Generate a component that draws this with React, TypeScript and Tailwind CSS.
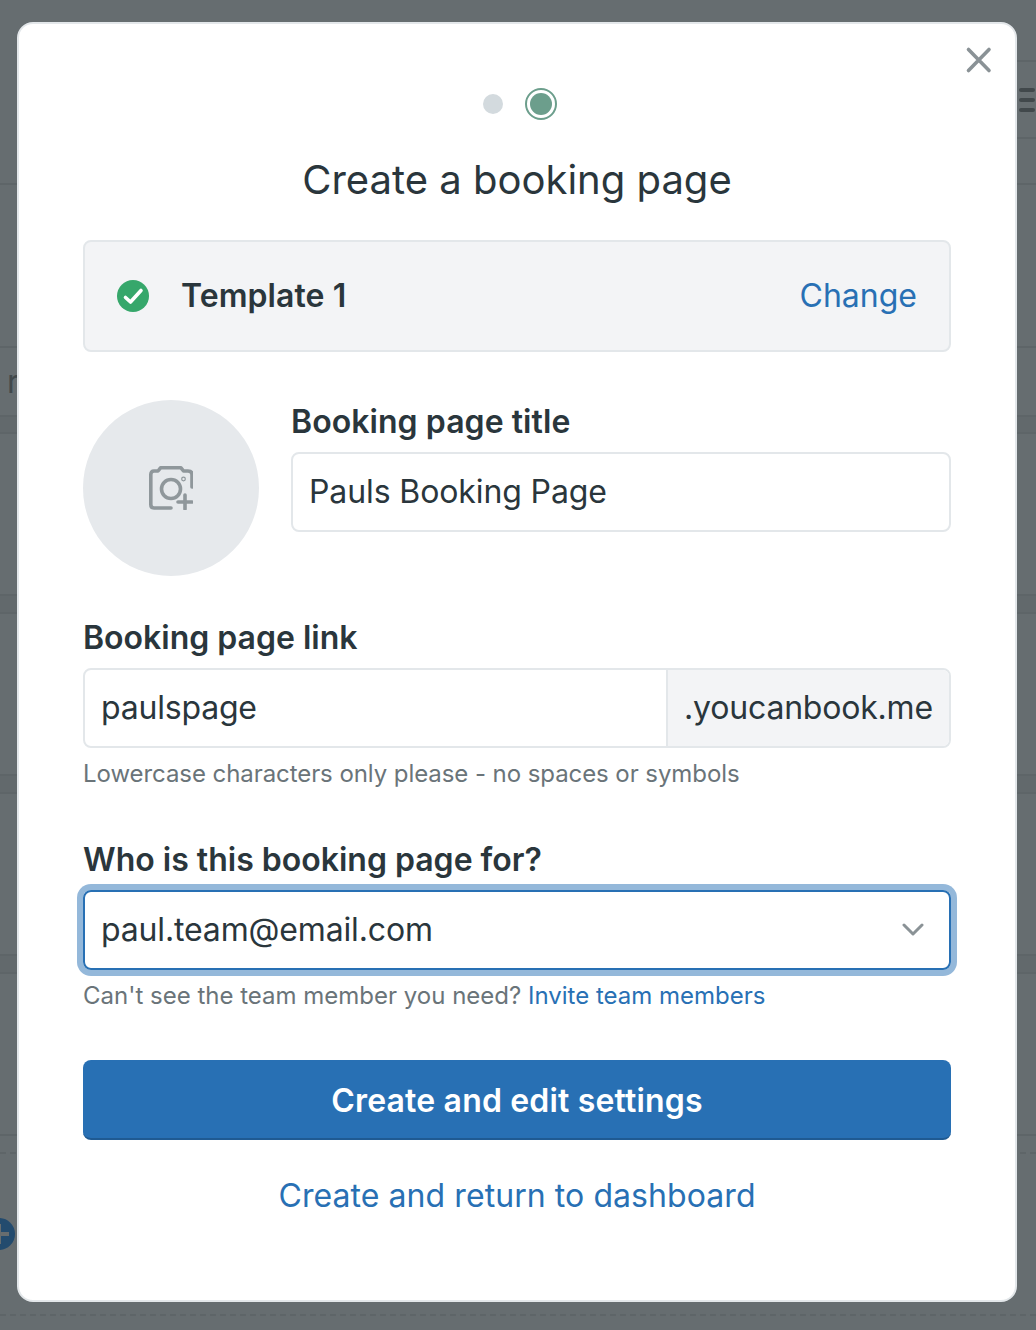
import React from "react";

const line = "shrink-0 border-b-2 border-[#5e6568]";

function PageBehind() {
  return (
    <div className="h-[1330px] bg-[#666d70] overflow-hidden flex flex-col font-['Inter',sans-serif]">
      <div className="h-[185px] shrink-0 border-b-2 border-[#5e6568] flex justify-end">
        <div className="w-[20px] flex flex-col">
          <div className="h-[62px] shrink-0 border-b-2 border-[#5e6568]" />
          <div className="h-[77px] shrink-0 border-b-2 border-[#5e6568] pt-[26px] pl-[3px] pr-[1px] flex flex-col gap-[6px]">
            <div className="h-[4px] rounded-full bg-[#41484b]" />
            <div className="h-[4px] rounded-full bg-[#41484b]" />
            <div className="h-[4px] rounded-full bg-[#41484b]" />
          </div>
        </div>
      </div>
      <div className={`h-[163px] ${line}`} />
      <div className={`h-[69px] ${line} pl-[7px] pt-[14px] text-[32px] leading-[40px] text-[#41484b]`}>r</div>
      <div className={`h-[17px] ${line} bg-[#62696c]`} />
      <div className={`h-[162px] ${line}`} />
      <div className={`h-[18px] ${line} bg-[#62696c]`} />
      <div className={`h-[162px] ${line}`} />
      <div className={`h-[18px] ${line} bg-[#62696c]`} />
      <div className={`h-[162px] ${line}`} />
      <div className={`h-[18px] ${line} bg-[#62696c]`} />
      <div className={`h-[162px] ${line}`} />
      <div className="h-[18px] shrink-0 border-b-2 border-dashed border-[#5e6568]" />
      <div className="h-[162px] shrink-0 border-b-2 border-dashed border-[#5e6568] pt-[64px]">
        <div className="w-[32px] h-[32px] -ml-[17px] rounded-full bg-[#234b6e] flex items-center justify-center">
          <div className="relative w-[20px] h-[20px]">
            <div className="absolute left-[8px] top-0 w-[4px] h-[20px] bg-[#666c6f]" />
            <div className="absolute left-0 top-[8px] w-[20px] h-[4px] bg-[#666c6f]" />
          </div>
        </div>
      </div>
    </div>
  );
}

function Label({ children, className = "" }: { children: React.ReactNode; className?: string }) {
  return <div className={`text-[32px] leading-[40px] font-semibold text-[#2a363c] ${className}`}>{children}</div>;
}

export default function App() {
  return (
    <div className="relative w-[1036px] h-[1330px] overflow-hidden font-['Inter',sans-serif]">
      <PageBehind />
      <div className="absolute left-[17px] top-[22px] w-[1000px] h-[1280px] bg-white border-2 border-[#e3e7ea] rounded-[16px] px-[64px]">
        <button className="absolute right-[23px] top-[22px] w-[28px] h-[28px] text-[#8a9296]">
          <svg viewBox="0 0 28 28" className="w-[28px] h-[28px]" fill="none" stroke="currentColor" strokeWidth="3.6" strokeLinecap="round">
            <path d="M4.5 3.5 L25 24.5 M25 3.5 L4.5 24.5" />
          </svg>
        </button>

        <div className="flex items-center justify-center h-[32px] mt-[64px] gap-[22px] pl-[6px]">
          <div className="w-[20px] h-[20px] rounded-full bg-[#d3dade]" />
          <div className="w-[32px] h-[32px] rounded-full border-2 border-[#6c9e8c] flex items-center justify-center">
            <div className="w-[22px] h-[22px] rounded-full bg-[#6c9e8c]" />
          </div>
        </div>

        <h1 className="mt-[36px] text-center text-[40px] leading-[48px] font-normal text-[#2a363c]">Create a booking page</h1>

        <div className="mt-[36px] h-[112px] rounded-[8px] border-2 border-[#e3e7ea] bg-[#f3f4f6] flex items-center px-[32px]">
          <svg viewBox="0 0 32 32" className="w-[32px] h-[32px] shrink-0">
            <circle cx="16" cy="16" r="16" fill="#36a76b" />
            <path d="M8.5 17.5 L13.5 22 L24 10.5" fill="none" stroke="#fff" strokeWidth="3.6" strokeLinecap="round" strokeLinejoin="round" />
          </svg>
          <Label className="ml-[32px] tracking-[0.07px]">Template 1</Label>
          <div className="ml-auto text-[32px] leading-[40px] text-[#2870b4]">Change</div>
        </div>

        <div className="mt-[48px] flex gap-[32px]">
          <div className="w-[176px] h-[176px] shrink-0 rounded-full bg-[#e6e9ec] flex items-center justify-center">
            <svg viewBox="0 0 44 44" className="w-[44px] h-[44px]" fill="none" stroke="#8f979b" strokeWidth="3.6" strokeLinecap="round" strokeLinejoin="round">
              <path d="M22 42 H5 Q1.8 42 1.8 38.5 V8.5 Q1.8 5 5 5 H9 L11.5 1.8 H32 L34.5 5 H39 Q43 5 43 8.5 V21" />
              <circle cx="22" cy="23" r="9.5" />
              <path d="M36 29 V43 M29 36 H43" />
              <circle cx="34.5" cy="13" r="0.6" />
            </svg>
          </div>
          <div className="flex-1 pt-[2px]">
            <Label className="tracking-[0.06px]">Booking page title</Label>
            <div className="mt-[10px] h-[80px] rounded-[8px] border-2 border-[#e3e7ea] bg-white flex items-center px-[16px] text-[32px] text-[#2a363c] tracking-[-0.11px]">
              Pauls Booking Page
            </div>
          </div>
        </div>

        <div className="mt-[42px]">
          <Label>Booking page link</Label>
          <div className="mt-[10px] h-[80px] rounded-[8px] border-2 border-[#e3e7ea] flex items-stretch text-[32px] text-[#2a363c]">
            <div className="flex-1 flex items-center px-[16px] tracking-[-0.2px]">paulspage</div>
            <div className="w-[283px] flex items-center justify-center border-l-2 border-[#e3e7ea] bg-[#f3f4f6] rounded-r-[6px] tracking-[-0.2px]">.youcanbook.me</div>
          </div>
          <div className="mt-[12px] text-[24px] leading-[28px] text-[#6a7479] tracking-[-0.07px]">Lowercase characters only please - no spaces or symbols</div>
        </div>

        <div className="mt-[52px]">
          <Label>Who is this booking page for?</Label>
          <div className="mt-[10px] h-[80px] rounded-[8px] border-2 border-[#2870b4] shadow-[0_0_0_6px_#94b8da] flex items-center px-[16px] text-[32px] text-[#2a363c]">
            <span className="tracking-[-0.15px]">paul.team@email.com</span>
            <svg viewBox="0 0 22 14" className="ml-auto mr-[9px] w-[22px] h-[14px]" fill="none" stroke="#8a9296" strokeWidth="3" strokeLinecap="round" strokeLinejoin="round">
              <path d="M2 2 L11 11 L20 2" />
            </svg>
          </div>
          <div className="mt-[12px] text-[24px] leading-[28px] text-[#6a7479]">
            Can't see the team member you need? <span className="text-[#2870b4]">Invite team members</span>
          </div>
        </div>

        <button className="mt-[50px] w-full h-[80px] pt-[4px] rounded-[8px] bg-[#2870b4] border-b-2 border-[#1f5a92] text-white text-[32px] font-semibold tracking-[0.17px]">
          Create and edit settings
        </button>

        <div className="mt-[36px] text-center text-[32px] leading-[40px] text-[#2870b4] tracking-[0.07px]">Create and return to dashboard</div>
      </div>
    </div>
  );
}
